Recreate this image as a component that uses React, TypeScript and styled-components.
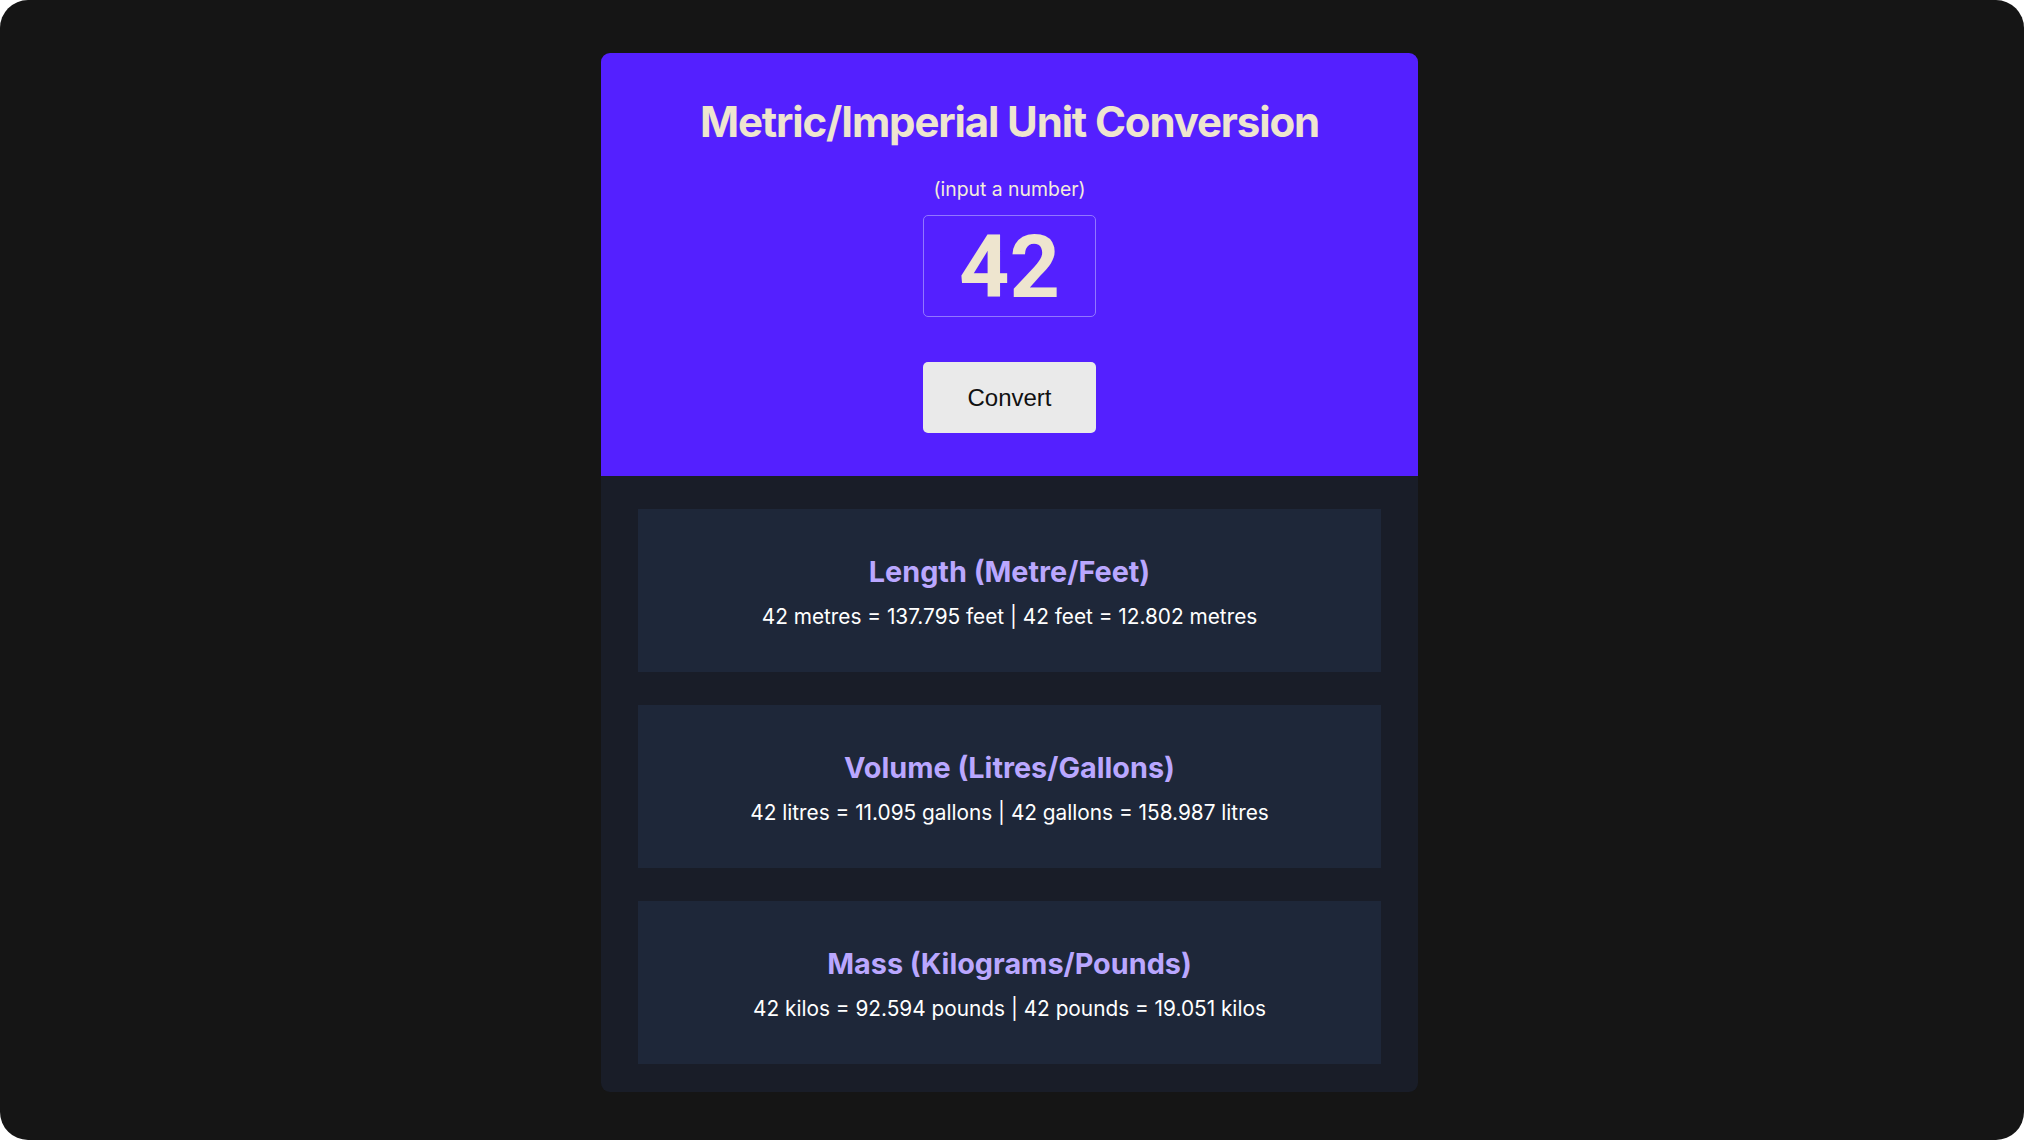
import React from "react";
import styled, { createGlobalStyle } from "styled-components";

const GlobalStyle = createGlobalStyle`
  html, body {
    margin: 0;
    padding: 0;
    background: #ffffff;
  }
  body {
    font-family: Inter, "Noto Sans", sans-serif;
  }
  * { box-sizing: border-box; }
`;

const Page = styled.div`
  width: 2024px;
  height: 1140px;
  background: #151515;
  border-radius: 28px;
  display: flex;
  justify-content: center;
  align-items: flex-start;
  padding: 53px 5px 0 0;
  overflow: hidden;
`;

const Card = styled.main`
  width: 817px;
  border-radius: 9px;
  overflow: hidden;
  background: #191d28;
  display: flex;
  flex-direction: column;
`;

const Header = styled.header`
  background: #5420ff;
  height: 423px;
  padding-top: 43px;
  display: flex;
  flex-direction: column;
  align-items: center;
`;

const Title = styled.h1`
  margin: 0 0 31px;
  font-family: Inter, sans-serif;
  font-weight: 700;
  font-size: 42px;
  line-height: 51px;
  letter-spacing: -1.15px;
  color: #eee5cf;
`;

const Hint = styled.p`
  margin: 0 0 15px;
  font-family: Inter, sans-serif;
  font-size: 19.4px;
  line-height: 22px;
  color: #f3ecdb;
`;

const NumberInput = styled.input`
  width: 173px;
  height: 102px;
  border: 1px solid #9276ff;
  border-radius: 5px;
  background: transparent;
  color: #eee5cf;
  font-family: Roboto, "Liberation Sans", sans-serif;
  font-weight: 700;
  font-size: 88px;
  text-align: center;
  padding: 0;
  margin: 0 0 45px;
  outline: none;
`;

const ConvertButton = styled.button`
  width: 173px;
  height: 71px;
  border: none;
  border-radius: 5px;
  background: #eaeaea;
  color: #111111;
  font-family: "Liberation Sans", Arial, sans-serif;
  font-size: 24px;
  cursor: pointer;
  padding: 0;
`;

const Results = styled.section`
  height: 616px;
  padding: 33px 37px 28px;
  display: flex;
  flex-direction: column;
  gap: 33px;
`;

const ResultCard = styled.div`
  height: 163px;
  background: #1e2739;
  padding-top: 45px;
  display: flex;
  flex-direction: column;
  align-items: center;
  gap: 15px;
`;

const ResultTitle = styled.h2`
  margin: 0;
  font-family: Inter, sans-serif;
  font-weight: 700;
  font-size: 28.8px;
  line-height: 35px;
  color: #baa7ff;
`;

const ResultText = styled.p`
  margin: 0;
  font-family: Inter, sans-serif;
  font-size: 20.8px;
  line-height: 25px;
  color: #ffffff;
`;

const results = [
  {
    title: "Length (Metre/Feet)",
    text: "42 metres = 137.795 feet | 42 feet = 12.802 metres",
  },
  {
    title: "Volume (Litres/Gallons)",
    text: "42 litres = 11.095 gallons | 42 gallons = 158.987 litres",
  },
  {
    title: "Mass (Kilograms/Pounds)",
    text: "42 kilos = 92.594 pounds | 42 pounds = 19.051 kilos",
  },
];

export default function App() {
  return (
    <>
      <GlobalStyle />
      <Page>
        <Card>
          <Header>
            <Title>Metric/Imperial Unit Conversion</Title>
            <Hint>(input a number)</Hint>
            <NumberInput type="text" defaultValue="42" />
            <ConvertButton>Convert</ConvertButton>
          </Header>
          <Results>
            {results.map((r) => (
              <ResultCard key={r.title}>
                <ResultTitle>{r.title}</ResultTitle>
                <ResultText>{r.text}</ResultText>
              </ResultCard>
            ))}
          </Results>
        </Card>
      </Page>
    </>
  );
}
